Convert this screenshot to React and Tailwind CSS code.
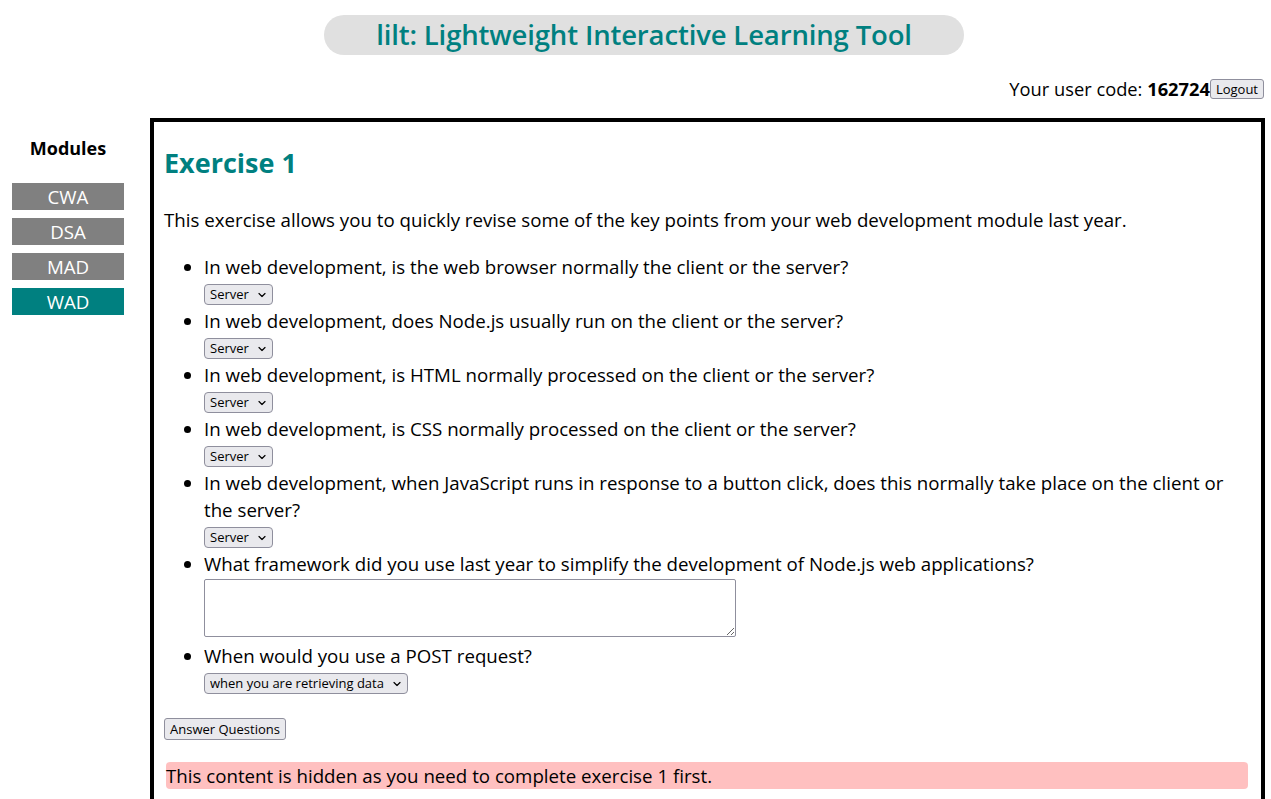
import React from "react";

function Chevron() {
  return (
    <svg
      className="pointer-events-none absolute right-[7px] top-1/2 -translate-y-1/2"
      width="8"
      height="5"
      viewBox="0 0 8 5"
      fill="none"
    >
      <path d="M1 1l3 3 3-3" stroke="#000" strokeWidth="1.2" strokeLinecap="round" strokeLinejoin="round" />
    </svg>
  );
}

function Select({ value, width }) {
  return (
    <span className={`relative block h-[21px] ${width}`}>
      <select
        defaultValue={value}
        className="block appearance-none h-[21px] w-full rounded-[4px] border border-[#8f8f9d] bg-[#e9e9ed] pl-[5px] pr-[18px] text-[13px] leading-[19px] text-black"
      >
        <option>{value}</option>
      </select>
      <Chevron />
    </span>
  );
}

const questions = [
  "In web development, is the web browser normally the client or the server?",
  "In web development, does Node.js usually run on the client or the server?",
  "In web development, is HTML normally processed on the client or the server?",
  "In web development, is CSS normally processed on the client or the server?",
  "In web development, when JavaScript runs in response to a button click, does this normally take place on the client or the server?",
];

export default function App() {
  return (
    <div className="min-h-screen bg-white text-black font-['Open_Sans','Noto_Sans',sans-serif] text-[18.7px] leading-[27px]">
      <header className="pt-[15px]">
        <div className="ml-[324px] flex h-[40px] w-[640px] items-center justify-center rounded-full bg-[#e0e0e0]">
          <h1 className="text-[27.5px] font-semibold leading-none tracking-[-0.15px] text-[#008080]">
            lilt: Lightweight Interactive Learning Tool
          </h1>
        </div>
      </header>

      <div className="mt-[24px] flex h-[20px] items-center justify-end pr-[7px]">
        <span className="-mt-[2px] text-[18.3px]">
          Your user code: <b className="font-bold">162724</b>
        </span>
        <button className="h-[20px] rounded-[3px] border border-[#8f8f9d] bg-[#e9e9ed] px-[5px] text-[13px] leading-[18px]">
          Logout
        </button>
      </div>

      <div className="mt-[19px] flex">
        <nav className="w-[150px] shrink-0 pl-[12px] pr-[26px] pt-[17px]">
          <h2 className="text-center font-bold text-[18px]">Modules</h2>
          <div className="mt-[21px] flex flex-col gap-[8px]">
            {["CWA", "DSA", "MAD"].map((m) => (
              <div key={m} className="flex h-[27px] items-center justify-center bg-[#808080] text-white">
                {m}
              </div>
            ))}
            <div className="flex h-[27px] items-center justify-center bg-[#008080] text-white">WAD</div>
          </div>
        </nav>

        <main className="mr-[6px] flex-1 border-4 border-b-0 border-black px-[10px] pb-[20px]">
          <h2 className="mt-[23px] text-[27px] font-bold leading-[36px] text-[#008080]">Exercise 1</h2>
          <p className="mt-[25px]">
            This exercise allows you to quickly revise some of the key points from your web development module last year.
          </p>
          <ul className="mt-[20px] list-disc pl-[40px]">
            {questions.map((q) => (
              <li key={q}>
                <div>{q}</div>
                <div className="flex h-[27px] items-start pt-[4px]">
                  <Select value="Server" width="w-[69px]" />
                </div>
              </li>
            ))}
            <li>
              <div>What framework did you use last year to simplify the development of Node.js web applications?</div>
              <div className="pb-[5px] pt-[2px]">
                <textarea className="block h-[58px] w-[532px] rounded-[2px] border border-[#8f8f9d] bg-white" />
              </div>
            </li>
            <li>
              <div>When would you use a POST request?</div>
              <div className="flex h-[27px] items-start pt-[4px]">
                <Select value="when you are retrieving data" width="w-[204px]" />
              </div>
            </li>
          </ul>
          <button className="mt-[22px] h-[22px] rounded-[3px] border border-[#8f8f9d] bg-[#e9e9ed] px-[5px] text-[13px] leading-[20px]">
            Answer Questions
          </button>
          <div className="ml-[2px] mr-[3px] mt-[22px] h-[27px] rounded-[4px] bg-[#ffc0c0]">
            This content is hidden as you need to complete exercise 1 first.
          </div>
        </main>
      </div>
    </div>
  );
}
